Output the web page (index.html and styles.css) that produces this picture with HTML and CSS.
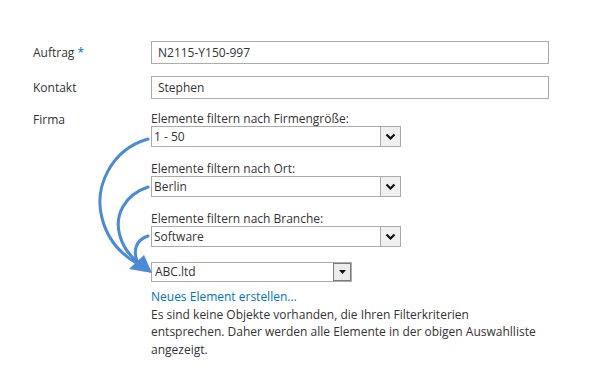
FILE: index.html
```html
<!DOCTYPE html>
<html lang="de">
<head>
    <meta charset="UTF-8">
    <title>Auftrag bearbeiten</title>
    <link rel="stylesheet" href="styles.css">
</head>
<body>
    <div class="form">
        <div class="row">
            <div class="label">Auftrag <span class="req">*</span></div>
            <div class="field"><div class="input">N2115-Y150-997</div></div>
        </div>
        <div class="row">
            <div class="label">Kontakt</div>
            <div class="field"><div class="input">Stephen</div></div>
        </div>
        <div class="row firma">
            <div class="label">Firma</div>
            <div class="field">
                <div class="filter">
                    <div class="filter-label">Elemente filtern nach Firmengröße:</div>
                    <div class="select">
                        <span class="value">1 - 50</span>
                        <span class="btn"><svg width="11" height="7" viewBox="0 0 11 7"><polyline points="1.5,1.5 5.5,5.5 9.5,1.5" fill="none" stroke="#111" stroke-width="2.2"/></svg></span>
                    </div>
                </div>
                <div class="filter">
                    <div class="filter-label">Elemente filtern nach Ort:</div>
                    <div class="select">
                        <span class="value">Berlin</span>
                        <span class="btn"><svg width="11" height="7" viewBox="0 0 11 7"><polyline points="1.5,1.5 5.5,5.5 9.5,1.5" fill="none" stroke="#111" stroke-width="2.2"/></svg></span>
                    </div>
                </div>
                <div class="filter">
                    <div class="filter-label">Elemente filtern nach Branche:</div>
                    <div class="select">
                        <span class="value">Software</span>
                        <span class="btn"><svg width="11" height="7" viewBox="0 0 11 7"><polyline points="1.5,1.5 5.5,5.5 9.5,1.5" fill="none" stroke="#111" stroke-width="2.2"/></svg></span>
                    </div>
                </div>
                <div class="select lookup">
                    <span class="value">ABC.ltd</span>
                    <span class="btn"><svg width="7" height="4" viewBox="0 0 7 4"><polygon points="0,0 7,0 3.5,4" fill="#111"/></svg></span>
                </div>
                <a class="link" href="#">Neues Element erstellen...</a>
                <p class="hint">Es sind keine Objekte vorhanden, die Ihren Filterkriterien<br>entsprechen. Daher werden alle Elemente in der obigen Auswahlliste<br>angezeigt.</p>
            </div>
        </div>

        <!-- arrows drawn over the form -->
        <svg class="arrows" width="612" height="384" viewBox="0 0 612 384">
            <g fill="none" stroke="#4a8ad6" stroke-width="3" stroke-linecap="round">
                <path d="M148 139 C 110 150, 94 188, 102 218 C 108 242, 122 255, 138 264"/>
                <path d="M148 187 C 124 195, 114 216, 120 236 C 124 250, 131 257, 139 263"/>
                <path d="M148 236 C 136 240, 133 250, 137 261"/>
            </g>
            <polygon points="152,273 129,269 144,255" fill="#4a8ad6"/>
        </svg>
    </div>
</body>
</html>
```

FILE: styles.css
```css
body {
    margin: 0;
    background: #fff;
    color: #444;
    font-family: "Open Sans", "Noto Sans", sans-serif;
    font-size: 12px;
}
.form {
    position: relative;
    width: 612px;
    height: 384px;
    padding: 41px 0 0 33px;
    box-sizing: border-box;
}
.row {
    display: grid;
    grid-template-columns: 118px 398px;
    margin-bottom: 12px;
}
.label {
    line-height: 23px;
    color: #333;
}
.req {
    color: #0072c6;
}
.input {
    height: 23px;
    border: 1px solid #ababab;
    box-sizing: border-box;
    padding: 0 6px;
    line-height: 21px;
    color: #333;
}
.firma {
    margin-top: 2px;
}
.firma .label {
    line-height: 17px;
}
.filter {
    width: 250px;
    margin-bottom: 14px;
}
.filter-label {
    line-height: 15px;
    color: #333;
}
.select {
    display: flex;
    height: 21px;
    border: 1px solid #ababab;
    box-sizing: border-box;
    color: #333;
}
.select .value {
    flex: 1;
    padding-left: 2px;
    line-height: 19px;
}
.select .btn {
    width: 19px;
    display: flex;
    align-items: center;
    justify-content: center;
    background: #f0f0f0;
    border-left: 1px solid #ababab;
}
.lookup {
    width: 201px;
    height: 20px;
    margin-top: 15px;
}
.lookup .value {
    padding-left: 3px;
    line-height: 18px;
}
.lookup .btn {
    width: 16px;
    border: 1px solid #7a7a7a;
    background: #ececec;
}
.link {
    display: block;
    margin-top: 6px;
    color: #0072c6;
    text-decoration: none;
    line-height: 17.5px;
}
.hint {
    margin: 0;
    line-height: 17.5px;
    color: #333;
}
.arrows {
    position: absolute;
    top: 0;
    left: 0;
    pointer-events: none;
}
```
